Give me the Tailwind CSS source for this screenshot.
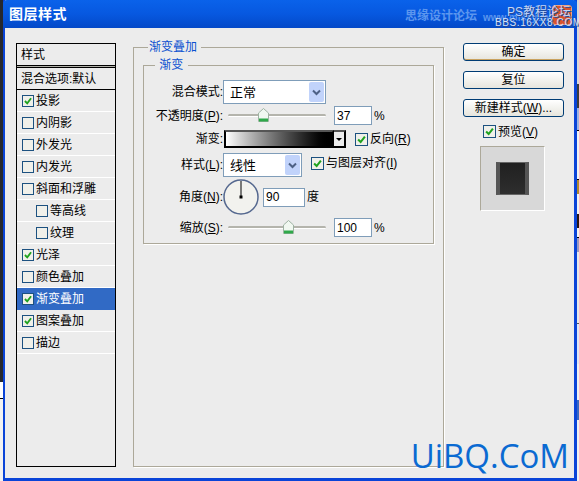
<!DOCTYPE html>
<html lang="zh-CN">
<head>
  <meta charset="UTF-8">
  <title>图层样式</title>
  <script src="https://cdn.jsdelivr.net/npm/@tailwindcss/browser@4"></script>
</head>
<body class="w-[579px] h-[481px] overflow-hidden bg-[#f2f2f2] text-black text-[12px] leading-none font-['Liberation_Sans','Noto_Sans_CJK_SC',sans-serif]">
  <svg class="hidden">
    <symbol id="tick" viewBox="0 0 13 13"><path d="M2.5 6.5 L5.5 9.5 L10.5 3" fill="none" stroke="#1fa21f" stroke-width="2.4"/></symbol>
    <symbol id="arrow" viewBox="0 0 9 7"><path d="M1 1.5 L4.5 5 L8 1.5" fill="none" stroke="#4d6185" stroke-width="2"/></symbol>
    <symbol id="thumb" viewBox="0 0 11 14"><path d="M0.5 5 L5.5 0.5 L10.5 5 V13.5 H0.5 Z" fill="#f1f8f1" stroke="#9fb3a3"/><rect x="1" y="10.5" width="9" height="3" fill="#2fa84a"/></symbol>
  </svg>

  <div class="relative flex w-[579px] h-[481px]">
    <!-- desktop behind the window, left edge -->
    <div class="w-[3px] h-[481px] shrink-0 flex flex-col">
      <div class="h-[382px] bg-[#26282e]"></div>
      <div class="h-[16px] bg-white"></div>
      <div class="h-[1px] bg-black"></div>
      <div class="h-[82px] bg-[#f2f2f2]"></div>
    </div>

    <div id="window" class="relative w-[574px] h-[481px] shrink-0 flex flex-col border-l-[2px] border-r-[3px] border-b-[3px] border-[#0a44d8] bg-[#ececec]">
      <!-- title bar -->
      <div class="relative -ml-[2px] -mr-[3px] h-[28px] shrink-0 flex items-center pl-[6px] rounded-t-[4px] bg-gradient-to-b from-[#0a62ea] via-[#0758e0] to-[#0449c8]">
        <span class="text-white text-[14px] font-bold tracking-[0.5px]">图层样式</span>
        <span class="absolute left-[402px] top-[10px] whitespace-nowrap text-[12px] font-bold text-[#5c96ee]">思缘设计论坛</span>
        <span class="absolute left-[480px] top-[13px] whitespace-nowrap text-[10px] font-bold text-[#5c96ee]">www.missyuan</span>
        <div class="absolute left-[549px] top-[5px] w-[20px] h-[20px] rounded-[3px] bg-[#d8532e] border border-[#f0a080]"></div>
        <span class="absolute left-[504px] top-[6px] whitespace-nowrap text-[12px] text-[#c4d6f6] [text-shadow:1px_1px_0_#2a4a90]">PS教程论坛</span>
        <span class="absolute left-[492px] top-[18px] whitespace-nowrap text-[10px] tracking-[0.6px] text-[#d4e0f8] [text-shadow:1px_1px_0_#2a4a90]">BBS.16XX8.COM</span>
      </div>

      <div class="flex flex-1 pt-[15px] pl-[11px]">
        <!-- style list -->
        <div class="w-[100px] h-[424px] shrink-0 border-[1.5px] border-black bg-[#ececec]">
          <div class="h-[21px] flex items-center pl-[4px]">样式</div>
          <div class="h-[3px] border-y border-black bg-[#b0b0a8]"></div>
          <div class="h-[22px] flex items-center pl-[4px] border-b border-black">混合选项:默认</div>
          <div class="h-[22px] flex items-center gap-[2px] pl-[5px] border-b border-white"><span class="relative w-[12px] h-[12px] border-[1px] border-[#1c5180] bg-[#f0f0ea]"><svg class="absolute inset-0 w-[10px] h-[10px]"><use href="#tick"/></svg></span>投影</div>
          <div class="h-[22px] flex items-center gap-[2px] pl-[5px] border-b border-white"><span class="w-[12px] h-[12px] border-[1px] border-[#1c5180] bg-[#f0f0ea]"></span>内阴影</div>
          <div class="h-[22px] flex items-center gap-[2px] pl-[5px] border-b border-white"><span class="w-[12px] h-[12px] border-[1px] border-[#1c5180] bg-[#f0f0ea]"></span>外发光</div>
          <div class="h-[22px] flex items-center gap-[2px] pl-[5px] border-b border-white"><span class="w-[12px] h-[12px] border-[1px] border-[#1c5180] bg-[#f0f0ea]"></span>内发光</div>
          <div class="h-[22px] flex items-center gap-[2px] pl-[5px] border-b border-white"><span class="w-[12px] h-[12px] border-[1px] border-[#1c5180] bg-[#f0f0ea]"></span>斜面和浮雕</div>
          <div class="h-[22px] flex items-center gap-[2px] pl-[19px] border-b border-white"><span class="w-[12px] h-[12px] border-[1px] border-[#1c5180] bg-[#f0f0ea]"></span>等高线</div>
          <div class="h-[22px] flex items-center gap-[2px] pl-[19px] border-b border-white"><span class="w-[12px] h-[12px] border-[1px] border-[#1c5180] bg-[#f0f0ea]"></span>纹理</div>
          <div class="h-[22px] flex items-center gap-[2px] pl-[5px] border-b border-white"><span class="relative w-[12px] h-[12px] border-[1px] border-[#1c5180] bg-[#f0f0ea]"><svg class="absolute inset-0 w-[10px] h-[10px]"><use href="#tick"/></svg></span>光泽</div>
          <div class="h-[22px] flex items-center gap-[2px] pl-[5px] border-b border-white"><span class="w-[12px] h-[12px] border-[1px] border-[#1c5180] bg-[#f0f0ea]"></span>颜色叠加</div>
          <div class="h-[22px] flex items-center gap-[2px] pl-[5px] bg-[#316ac5] text-white"><span class="relative w-[12px] h-[12px] border-[1px] border-[#1c5180] bg-[#f0f0ea]"><svg class="absolute inset-0 w-[10px] h-[10px]"><use href="#tick"/></svg></span>渐变叠加</div>
          <div class="h-[22px] flex items-center gap-[2px] pl-[5px] border-b border-white"><span class="relative w-[12px] h-[12px] border-[1px] border-[#1c5180] bg-[#f0f0ea]"><svg class="absolute inset-0 w-[10px] h-[10px]"><use href="#tick"/></svg></span>图案叠加</div>
          <div class="h-[22px] flex items-center gap-[2px] pl-[5px] border-b border-white"><span class="w-[12px] h-[12px] border-[1px] border-[#1c5180] bg-[#f0f0ea]"></span>描边</div>
        </div>

        <!-- gradient overlay group -->
        <fieldset class="ml-[17px] -mt-[2px] w-[310px] h-[426px] shrink-0 border border-[#aca899] shadow-[1px_1px_0_#fff] px-[9px] pt-[6px]">
          <legend class="ml-[5px] px-[1px] text-[12px] text-[#0a50d0] leading-[12px]">渐变叠加&nbsp;</legend>
          <fieldset class="w-[291px] h-[185px] border border-[#aca899] shadow-[1px_1px_0_#fff]">
            <legend class="ml-[11px] px-[1px] text-[12px] text-[#0a50d0] leading-[12px]">&nbsp;渐变&nbsp;</legend>
            <div class="flex flex-col pt-[9px]">
              <div class="flex items-center h-[24px]">
                <div class="w-[79px] text-right">混合模式:</div>
                <div class="w-[103px] h-[24px] flex items-center justify-between pl-[6px] border border-[#7f9db9] bg-white text-[13px]">正常
                  <span class="w-[15px] h-[20px] mr-[1px] flex items-center justify-center rounded-[2px] bg-[#c1d3fb]"><svg class="w-[9px] h-[7px]"><use href="#arrow"/></svg></span>
                </div>
              </div>
              <div class="flex items-center h-[19px] mt-[2px]">
                <div class="w-[79px] text-right">不透明度(<span class="underline">P</span>):</div>
                <div class="relative ml-[5px] w-[98px] h-[3px] rounded-full bg-[#b4b4ac] border-b border-white">
                  <svg class="absolute left-[30px] -top-[6px] w-[11px] h-[14px]"><use href="#thumb"/></svg>
                </div>
                <div class="ml-[8px] w-[38px] h-[19px] flex items-center pl-[2px] border border-[#7f9db9] bg-white">37</div>
                <div class="ml-[2px]">%</div>
              </div>
              <div class="flex items-center h-[18px] mt-[5px]">
                <div class="w-[79px] text-right">渐变:</div>
                <div class="ml-[1px] w-[110px] h-[18px] border-[2px] border-black border-t-[#555] bg-gradient-to-r from-white to-black"></div>
                <div class="w-[12px] h-[18px] flex items-center justify-center border-y-[2px] border-r-[2px] border-black border-t-[#555] bg-[#ececec]"><span class="w-0 h-0 border-x-[3px] border-t-[3px] border-x-transparent border-t-black"></span></div>
                <span class="relative ml-[9px] w-[13px] h-[13px] border border-[#1c5180] bg-[#f0f0ea]"><svg class="absolute inset-0 w-[11px] h-[11px]"><use href="#tick"/></svg></span>
                <div class="ml-[2px]">反向(<span class="underline">R</span>)</div>
              </div>
              <div class="flex items-center h-[24px] mt-[5px]">
                <div class="w-[79px] text-right">样式(<span class="underline">L</span>):</div>
                <div class="w-[79px] h-[24px] flex items-center justify-between pl-[6px] border border-[#7f9db9] bg-white text-[13px]">线性
                  <span class="w-[15px] h-[20px] mr-[1px] flex items-center justify-center rounded-[2px] bg-[#c1d3fb]"><svg class="w-[9px] h-[7px]"><use href="#arrow"/></svg></span>
                </div>
                <span class="relative ml-[9px] -mt-[4px] w-[13px] h-[13px] border border-[#1c5180] bg-[#f0f0ea]"><svg class="absolute inset-0 w-[11px] h-[11px]"><use href="#tick"/></svg></span>
                <div class="ml-[2px] -mt-[4px]">与图层对齐(<span class="underline">I</span>)</div>
              </div>
              <div class="flex items-center h-[36px] mt-[2px]">
                <div class="w-[79px] text-right">角度(<span class="underline">N</span>):</div>
                <svg class="w-[36px] h-[36px]" viewBox="0 0 36 36">
                  <circle cx="18" cy="18" r="17" fill="#f2f2ee" stroke="#55688f" stroke-width="1.5"/>
                  <path d="M18 18 V2" stroke="#000" stroke-width="1"/>
                  <rect x="16.5" y="16.5" width="3" height="3" fill="#000"/>
                </svg>
                <div class="ml-[4px] w-[42px] h-[19px] flex items-center pl-[2px] border border-[#7f9db9] bg-white">90</div>
                <div class="ml-[2px]">度</div>
              </div>
              <div class="flex items-center h-[19px] mt-[3px]">
                <div class="w-[79px] text-right">缩放(<span class="underline">S</span>):</div>
                <div class="relative ml-[5px] w-[98px] h-[3px] rounded-full bg-[#b4b4ac] border-b border-white">
                  <svg class="absolute left-[55px] -top-[6px] w-[11px] h-[14px]"><use href="#thumb"/></svg>
                </div>
                <div class="ml-[8px] w-[38px] h-[19px] flex items-center pl-[2px] border border-[#7f9db9] bg-white">100</div>
                <div class="ml-[2px]">%</div>
              </div>
            </div>
          </fieldset>
        </fieldset>

        <!-- buttons -->
        <div class="ml-[19px] w-[101px] flex flex-col items-stretch">
          <button class="h-[18px] rounded-[3px] border border-[#003c74] bg-gradient-to-b from-white to-[#e6e5dd] shadow-[inset_0_-1px_0_#c9a25e] flex items-center justify-center">确定</button>
          <button class="mt-[10px] h-[18px] rounded-[3px] border border-[#003c74] bg-gradient-to-b from-white to-[#e6e5dd] flex items-center justify-center">复位</button>
          <button class="mt-[10px] h-[18px] rounded-[3px] border border-[#003c74] bg-gradient-to-b from-white to-[#e6e5dd] flex items-center justify-center">新建样式(<span class="underline">W</span>)...</button>
          <div class="mt-[8px] ml-[20px] flex items-center h-[13px]">
            <span class="relative w-[13px] h-[13px] border border-[#1c5180] bg-[#f0f0ea]"><svg class="absolute inset-0 w-[11px] h-[11px]"><use href="#tick"/></svg></span>
            <div class="ml-[2px]">预览(<span class="underline">V</span>)</div>
          </div>
          <div class="mt-[8px] ml-[17px] w-[65px] h-[65px] flex items-center justify-center bg-[#d8d8d8] border-[1px] border-t-[#aca899] border-l-[#aca899] border-r-white border-b-white">
            <div class="w-[33px] h-[33px] bg-gradient-to-b from-[#202020] to-[#2e2e2e] border-x-[4px] border-t-[1px] border-b-[1px] border-x-[#555555] border-t-[#666666] border-b-[#666666]"></div>
          </div>
        </div>
      </div>

      <div class="absolute right-[5px] bottom-[6px] text-[33px] leading-none text-[#0a6ad2] font-['Open_Sans',sans-serif]">UiBQ.CoM</div>
    </div>

    <!-- desktop behind the window, right edge -->
    <div class="w-[2px] h-[481px] shrink-0 flex flex-col bg-[#f0f0f0]">
      <div class="h-[84px] bg-[#d8d8d8]"></div>
      <div class="h-[24px] bg-[#3c3c3c]"></div>
      <div class="h-[22px] bg-[#9fb4e0]"></div>
      <div class="h-[50px] bg-[#f2f2f2] border-y border-black"></div>
      <div class="h-[14px] bg-[#b08a30]"></div>
      <div class="h-[20px] bg-[#f2f2f2]"></div>
      <div class="h-[14px] bg-[#2a1510]"></div>
      <div class="h-[10px] bg-[#f2f2f2] border-b border-black"></div>
      <div class="h-[14px] bg-[#9a9ac0]"></div>
      <div class="h-[72px] bg-[#e8e8e8] border-b border-[#555]"></div>
      <div class="h-[40px] bg-[#dfe6f5]"></div>
      <div class="h-[36px] bg-[#f0f0f0]"></div>
      <div class="h-[20px] bg-[#3a69c0]"></div>
    </div>
  </div>
</body>
</html>
